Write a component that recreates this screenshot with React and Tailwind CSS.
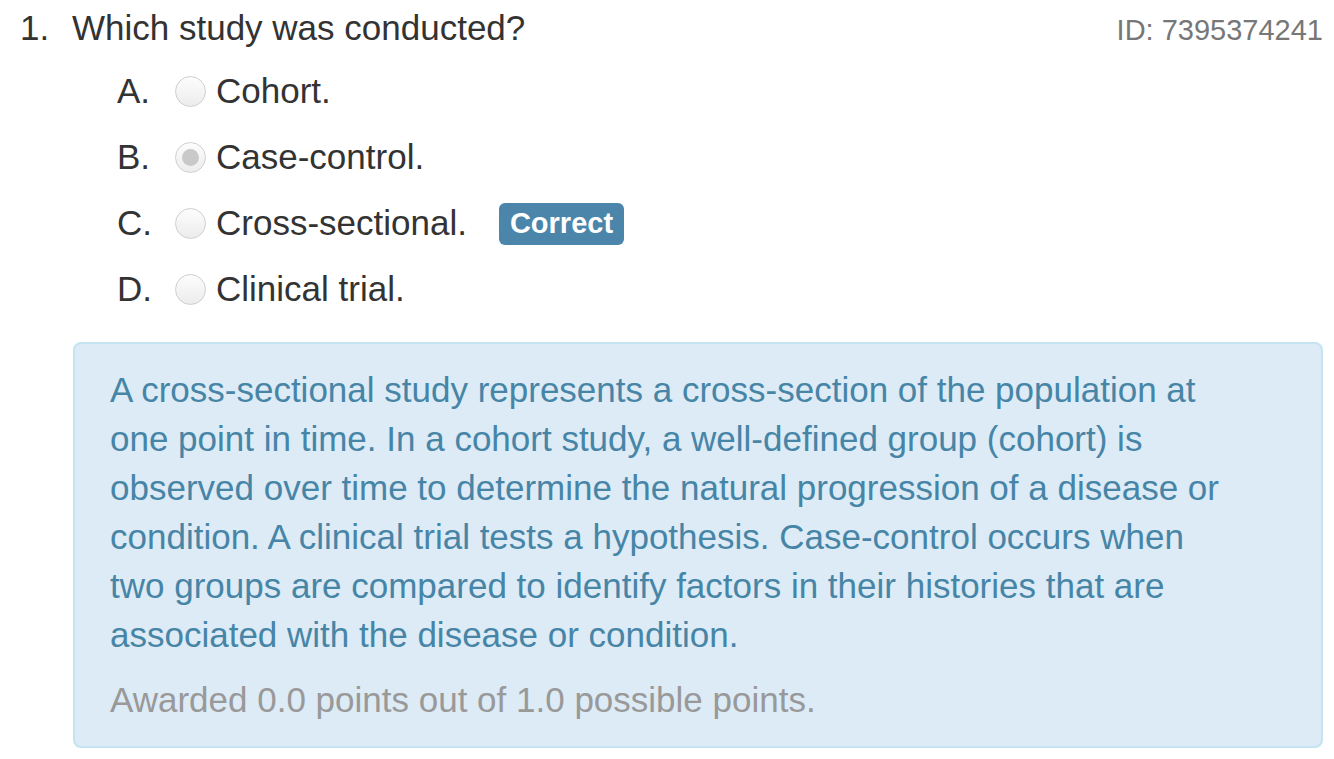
import React from "react";

const options = [
  { letter: "A.", text: "Cohort." },
  { letter: "B.", text: "Case-control.", checked: true },
  { letter: "C.", text: "Cross-sectional.", correct: true },
  { letter: "D.", text: "Clinical trial." },
];

function Radio({ checked }) {
  return (
    <span className="w-[31px] h-[31px] rounded-full border border-[#cfcfcf] bg-gradient-to-b from-[#fdfdfd] to-[#ececec] flex items-center justify-center shrink-0">
      {checked && <span className="w-[17px] h-[17px] rounded-full bg-[#c9c9c9]" />}
    </span>
  );
}

export default function App() {
  return (
    <div className="min-h-screen bg-white font-['Liberation_Sans',Arial,sans-serif] text-[#333] pl-[20px] pr-[11px] pt-[6px]">
      <div className="flex items-baseline justify-between">
        <div className="flex items-baseline text-[35px] leading-[44px]">
          <span className="w-[52px]">1.</span>
          <span>Which study was conducted?</span>
        </div>
        <div className="text-[29px] text-[#777]">ID: 7395374241</div>
      </div>

      <div className="pl-[97px] mt-[17px] flex flex-col gap-[22px]">
        {options.map((o) => (
          <div key={o.letter} className="flex items-center h-[44px] text-[35px]">
            <span className="w-[58px]">{o.letter}</span>
            <Radio checked={o.checked} />
            <span className="ml-[10px]">{o.text}</span>
            {o.correct && (
              <span className="ml-[32px] bg-[#4b86aa] text-white font-bold text-[29px] leading-none rounded-[6px] px-[11px] pt-[6px] pb-[7px]">
                Correct
              </span>
            )}
          </div>
        ))}
      </div>

      <div className="ml-[53px] mt-[30px] border-2 border-[#c4e4f1] bg-[#dcebf6] rounded-[8px] pl-[35px] pr-[30px] pt-[21px] pb-[22px]">
        <p className="text-[#4785a7] text-[35px] leading-[49px] max-w-[1122px]">
          A cross-sectional study represents a cross-section of the population at one point in time. In a cohort study, a well-defined group (cohort) is observed over time to determine the natural progression of a disease or condition. A clinical trial tests a hypothesis. Case-control occurs when two groups are compared to identify factors in their histories that are associated with the disease or condition.
        </p>
        <p className="text-[#999] text-[35px] leading-[49px] mt-[16px]">
          Awarded 0.0 points out of 1.0 possible points.
        </p>
      </div>
    </div>
  );
}
